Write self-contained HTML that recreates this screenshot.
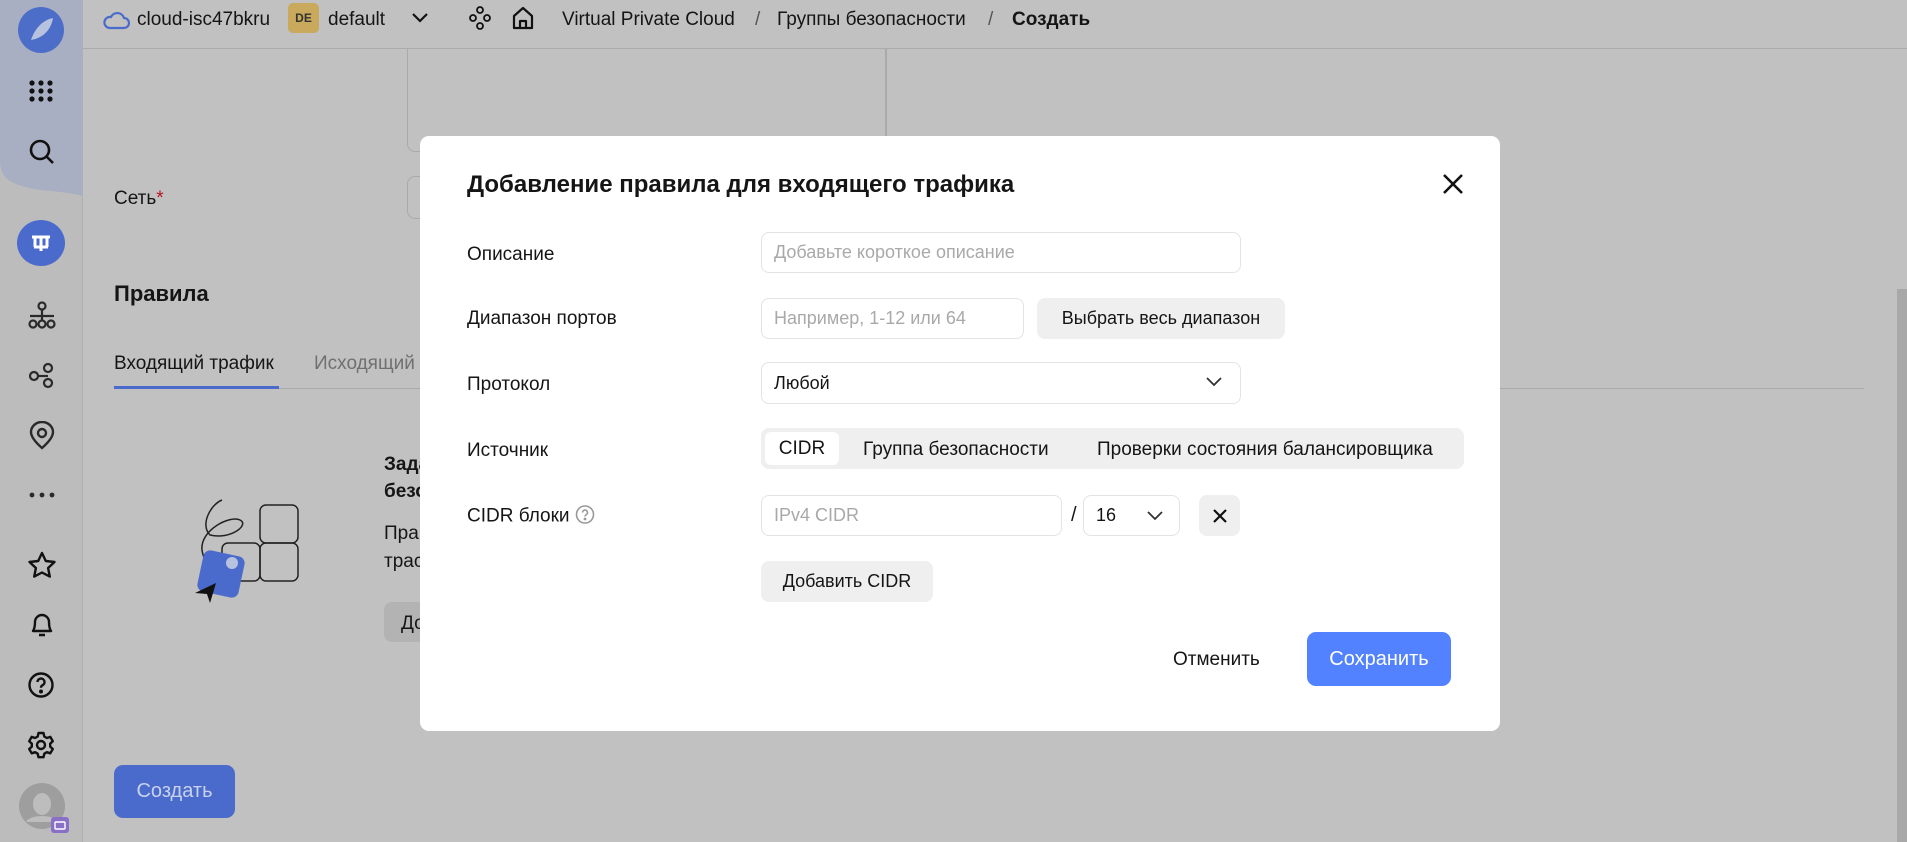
<!DOCTYPE html>
<html><head><meta charset="utf-8"><style>
*{box-sizing:border-box;margin:0;padding:0}
body{width:1907px;height:842px;overflow:hidden;background:#c1c1c1;font-family:"Liberation Sans","Noto Sans CJK SC",sans-serif;color:#151515;position:relative}
.abs{position:absolute}
.side{left:0;top:0;width:83px;height:842px;background:#bcbcbc;border-right:1px solid #b0b0b0}
.hdr{left:83px;top:0;width:1824px;height:49px;border-bottom:1px solid #ababab;background:#c1c1c1}
.t{position:absolute;white-space:nowrap}
.modal{left:420px;top:136px;width:1080px;height:595px;background:#fff;border-radius:9px}
.inp{position:absolute;border:1px solid #e3e3e3;border-radius:8px;background:#fff;font-size:18px;color:#a9a9a9;padding-left:12px;display:flex;align-items:center}
.btn{position:absolute;background:#efefef;border-radius:8px;font-size:18px;display:flex;align-items:center;justify-content:center;color:#151515}
.lbl{position:absolute;left:47px;font-size:19px;transform:translateY(-50%)}
</style></head><body>
<div class="abs side"></div>
<svg class="abs" style="left:0;top:0" width="84" height="200"><path d="M0 0H83V196C60 190 40 192 22 186 8 182 0 176 0 160Z" fill="#a9afc2"/></svg>
<svg class="abs" style="left:17px;top:6px" width="48" height="48"><circle cx="24" cy="24" r="23" fill="#4d6ec8"/><path d="M14 34C18 22 26 14 36 12 34 24 26 32 14 34Z" fill="#b7c2df"/></svg>
<svg class="abs" style="left:28px;top:79px" width="26" height="24" fill="#111"><g><circle cx="4" cy="4" r="2.6"/><circle cx="13" cy="4" r="2.6"/><circle cx="22" cy="4" r="2.6"/><circle cx="4" cy="12" r="2.6"/><circle cx="13" cy="12" r="2.6"/><circle cx="22" cy="12" r="2.6"/><circle cx="4" cy="20" r="2.6"/><circle cx="13" cy="20" r="2.6"/><circle cx="22" cy="20" r="2.6"/></g></svg>
<svg class="abs" style="left:28px;top:138px" width="28" height="28" fill="none" stroke="#111" stroke-width="2.6"><circle cx="12" cy="12" r="9"/><path d="M19 19l6 6"/></svg>
<svg class="abs" style="left:17px;top:220px" width="48" height="46"><ellipse cx="24" cy="23" rx="24" ry="23" fill="#4a6bcb"/><path d="M15 17h18M18 17v10M24 17v10M30 17v10M17 27h14M24 27v4" stroke="#fff" stroke-width="3" fill="none"/></svg>
<svg class="abs" style="left:28px;top:301px" width="28" height="30" fill="none" stroke="#2a2a2a" stroke-width="2.2"><circle cx="14" cy="5" r="3.5"/><circle cx="5" cy="23" r="3.5"/><circle cx="14" cy="23" r="3.5"/><circle cx="23" cy="23" r="3.5"/><path d="M14 9v10M2 15h24"/></svg>
<svg class="abs" style="left:28px;top:362px" width="28" height="28" fill="none" stroke="#2a2a2a" stroke-width="2.2"><circle cx="6" cy="14" r="4"/><circle cx="20" cy="6" r="4"/><circle cx="20" cy="21" r="4"/><path d="M10 14h10"/></svg>
<svg class="abs" style="left:28px;top:421px" width="28" height="30" fill="none" stroke="#2a2a2a" stroke-width="2.4"><path d="M14 27C6 20 3 15 3 11A11 10 0 0 1 25 11C25 15 22 20 14 27Z"/><circle cx="14" cy="12" r="4"/></svg>
<svg class="abs" style="left:28px;top:490px" width="28" height="10" fill="#2a2a2a"><circle cx="4" cy="5" r="2.4"/><circle cx="14" cy="5" r="2.4"/><circle cx="24" cy="5" r="2.4"/></svg>
<svg class="abs" style="left:27px;top:551px" width="30" height="28" fill="none" stroke="#111" stroke-width="2.4"><path d="M15 2l3.8 8 8.7 1-6.4 6 1.7 8.6L15 21.5 7.2 25.6 8.9 17 2.5 11l8.7-1Z" stroke-linejoin="round"/></svg>
<svg class="abs" style="left:29px;top:611px" width="26" height="28" fill="none" stroke="#111" stroke-width="2.4"><path d="M4 20C6 17 6 14 6 11A7 7 0 0 1 20 11C20 14 20 17 22 20Z M10 24h6" stroke-linejoin="round"/></svg>
<svg class="abs" style="left:27px;top:671px" width="28" height="28" fill="none" stroke="#111" stroke-width="2.4"><circle cx="14" cy="14" r="11.5"/><path d="M10.5 11a3.5 3.5 0 1 1 5 3.2c-1 .6-1.5 1.3-1.5 2.5"/><circle cx="14" cy="20.5" r=".8" fill="#111"/></svg>
<svg class="abs" style="left:27px;top:731px" width="28" height="28" fill="none" stroke="#111" stroke-width="2.4"><path d="M11.5 2h5l.8 3.5 2.6 1.5 3.4-1.1 2.5 4.3-2.6 2.4v3l2.6 2.4-2.5 4.3-3.4-1.1-2.6 1.5-.8 3.5h-5l-.8-3.5-2.6-1.5-3.4 1.1-2.5-4.3 2.6-2.4v-3L2.2 10.2l2.5-4.3 3.4 1.1 2.6-1.5Z" stroke-linejoin="round"/><circle cx="14" cy="14" r="4"/></svg>
<svg class="abs" style="left:18px;top:782px" width="52" height="56"><circle cx="24" cy="24" r="23" fill="#9e9e9e"/><ellipse cx="24" cy="22" rx="9" ry="11" fill="#bdbdbd"/><path d="M8 40c4-8 28-8 32 0" fill="#bdbdbd"/><rect x="33" y="35" width="18" height="16" rx="3" fill="#8a6fc6"/><rect x="37" y="40" width="10" height="7" rx="1" fill="none" stroke="#fff" stroke-width="1.4"/></svg>

<!-- background page -->
<div class="abs" style="left:885px;top:49px;width:1px;height:90px;background:#aaa"></div>
<div class="abs" style="left:407px;top:20px;width:480px;height:132px;border:1px solid #aaa;border-radius:8px"></div>
<div class="abs" style="left:407px;top:176px;width:40px;height:43px;border:1px solid #aaa;border-radius:8px"></div>

<!-- header -->
<div class="abs hdr"></div>
<svg class="abs" style="left:102px;top:9px" width="28" height="22" fill="none" stroke="#4a6bcb" stroke-width="2.2"><path d="M7 19h15a5 5 0 0 0 0-10 7 7 0 0 0-13-1A5.5 5.5 0 0 0 7 19Z"/></svg>
<div class="t" style="left:137px;top:9px;font-size:19px">cloud-isc47bkru</div>
<div class="abs" style="left:288px;top:3px;width:31px;height:30px;background:#c9a95b;border-radius:5px;font-size:12px;display:flex;align-items:center;justify-content:center;font-weight:bold;color:#333">DE</div>
<div class="t" style="left:328px;top:9px;font-size:19px">default</div>
<svg class="abs" style="left:411px;top:12px" width="18" height="12" fill="none" stroke="#111" stroke-width="2.2"><path d="M2 2l7 7 7-7"/></svg>
<svg class="abs" style="left:469px;top:6px" width="22" height="26" fill="none" stroke="#111" stroke-width="1.8"><circle cx="11" cy="4" r="3"/><circle cx="4" cy="12" r="3"/><circle cx="18" cy="12" r="3"/><circle cx="11" cy="20" r="3"/></svg>
<svg class="abs" style="left:511px;top:5px" width="24" height="26" fill="none" stroke="#111" stroke-width="2.2"><path d="M3 11L12 3l9 8v12H3Z M9 23v-7h6v7" stroke-linejoin="round"/></svg>
<div class="t" style="left:562px;top:9px;font-size:19px">Virtual Private Cloud</div>
<div class="t" style="left:755px;top:9px;font-size:19px;color:#555">/</div>
<div class="t" style="left:777px;top:9px;font-size:19px">Группы безопасности</div>
<div class="t" style="left:988px;top:9px;font-size:19px;color:#555">/</div>
<div class="t" style="left:1012px;top:9px;font-size:19px;font-weight:bold">Создать</div>

<div class="abs" style="left:1897px;top:289px;width:10px;height:553px;background:#a8a8a8"></div>
<div class="t" style="left:114px;top:188px;font-size:19px">Сеть<span style="color:#b3171d">*</span></div>
<div class="t" style="left:114px;top:281px;font-size:22px;font-weight:bold">Правила</div>
<div class="t" style="left:114px;top:353px;font-size:19px">Входящий трафик</div>
<div class="t" style="left:314px;top:353px;font-size:19px;color:#707070">Исходящий</div>
<div class="abs" style="left:114px;top:388px;width:1750px;height:1px;background:#aaa"></div>
<div class="abs" style="left:114px;top:386px;width:165px;height:3px;background:#4a6bcb"></div>
<svg class="abs" style="left:190px;top:495px" width="115" height="110" fill="none" stroke="#222" stroke-width="1.5">
<rect x="70" y="10" width="38" height="38" rx="6"/><rect x="70" y="48" width="38" height="38" rx="6"/><rect x="32" y="48" width="38" height="38" rx="6"/>
<path d="M32 5C20 10 10 30 20 40 40 45 60 30 50 25 40 20 10 35 12 55 14 70 25 75 30 80"/>
<rect x="10" y="58" width="42" height="42" rx="7" fill="#4a6bcb" stroke="none" transform="rotate(12 31 79)"/>
<circle cx="42" cy="68" r="6" fill="#b7c2df" stroke="none"/>
<path d="M5 98L26 88 20 108 17 99Z" fill="#111" stroke="none"/>
</svg>
<div class="t" style="left:384px;top:454px;font-size:19px;font-weight:bold">Зада</div>
<div class="t" style="left:384px;top:481px;font-size:19px;font-weight:bold">безо</div>
<div class="t" style="left:384px;top:523px;font-size:19px">Пра</div>
<div class="t" style="left:384px;top:551px;font-size:19px">трас</div>
<div class="abs" style="left:384px;top:602px;width:40px;height:40px;background:#b3b3b3;border-radius:8px 0 0 8px"></div>
<div class="t" style="left:401px;top:613px;font-size:19px">До</div>
<div class="abs" style="left:114px;top:765px;width:121px;height:53px;background:#4a6bcb;border-radius:9px;color:#c9d2ec;font-size:20px;display:flex;align-items:center;justify-content:center">Создать</div>

<!-- modal -->
<div class="abs modal">
<div class="t" style="left:47px;top:35px;font-size:24px;font-weight:bold">Добавление правила для входящего трафика</div>
<svg class="abs" style="left:1022px;top:37px" width="22" height="22" stroke="#111" stroke-width="2.6"><path d="M2 2l18 18M20 2L2 20"/></svg>
<div class="lbl" style="top:119px">Описание</div>
<div class="inp" style="left:341px;top:96px;width:480px;height:41px">Добавьте короткое описание</div>
<div class="lbl" style="top:183px">Диапазон портов</div>
<div class="inp" style="left:341px;top:162px;width:263px;height:41px">Например, 1-12 или 64</div>
<div class="btn" style="left:617px;top:162px;width:248px;height:41px">Выбрать весь диапазон</div>
<div class="lbl" style="top:249px">Протокол</div>
<div class="inp" style="left:341px;top:226px;width:480px;height:42px;color:#151515">Любой</div>
<svg class="abs" style="left:785px;top:240px" width="18" height="12" fill="none" stroke="#333" stroke-width="1.8"><path d="M2 2l7 7 7-7"/></svg>
<div class="lbl" style="top:315px">Источник</div>
<div class="abs" style="left:341px;top:292px;width:703px;height:41px;background:#efefef;border-radius:8px"></div>
<div class="abs" style="left:345px;top:296px;width:74px;height:33px;background:#fff;border-radius:6px;font-size:19px;display:flex;align-items:center;justify-content:center">CIDR</div>
<div class="t" style="left:443px;top:303px;font-size:19px">Группа безопасности</div>
<div class="t" style="left:677px;top:303px;font-size:19px">Проверки состояния балансировщика</div>
<div class="lbl" style="top:380px">CIDR блоки <svg width="20" height="20" style="vertical-align:-3px" fill="none" stroke="#999" stroke-width="1.6"><circle cx="10" cy="10" r="8.5"/><path d="M7.5 8a2.5 2.5 0 1 1 3.5 2.3c-.7.4-1 .9-1 1.7"/><circle cx="10" cy="14.5" r=".6" fill="#999"/></svg></div>
<div class="inp" style="left:341px;top:359px;width:301px;height:41px">IPv4 CIDR</div>
<div class="t" style="left:651px;top:368px;font-size:20px">/</div>
<div class="inp" style="left:663px;top:359px;width:97px;height:41px;color:#151515">16</div>
<svg class="abs" style="left:726px;top:374px" width="18" height="12" fill="none" stroke="#333" stroke-width="1.8"><path d="M2 2l7 7 7-7"/></svg>
<div class="btn" style="left:779px;top:359px;width:41px;height:41px"><svg width="16" height="16" stroke="#111" stroke-width="2.2"><path d="M2 2l12 12M14 2L2 14"/></svg></div>
<div class="btn" style="left:341px;top:425px;width:172px;height:41px">Добавить CIDR</div>
<div class="t" style="left:753px;top:513px;font-size:19px">Отменить</div>
<div class="abs" style="left:887px;top:496px;width:144px;height:54px;background:#5282ff;border-radius:9px;color:#fff;font-size:20px;display:flex;align-items:center;justify-content:center">Сохранить</div>
</div>
</body></html>
